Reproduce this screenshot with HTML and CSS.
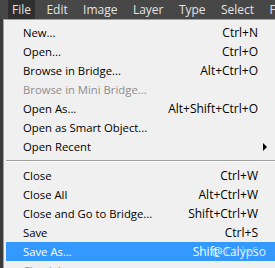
FILE: index.html
```html
<!DOCTYPE html>
<html lang="en">
<head>
    <meta charset="UTF-8">
    <title>File menu</title>
    <link rel="stylesheet" href="styles.css">
</head>
<body>
    <div class="menubar">
        <span class="menubar-item active">File</span>
        <span class="menubar-item">Edit</span>
        <span class="menubar-item">Image</span>
        <span class="menubar-item">Layer</span>
        <span class="menubar-item">Type</span>
        <span class="menubar-item">Select</span>
        <span class="menubar-item">Filter</span>
    </div>

    <div class="dropdown">
        <div class="menu-item"><span class="label">New...</span><span class="shortcut">Ctrl+N</span></div>
        <div class="menu-item"><span class="label">Open...</span><span class="shortcut">Ctrl+O</span></div>
        <div class="menu-item"><span class="label">Browse in Bridge...</span><span class="shortcut">Alt+Ctrl+O</span></div>
        <div class="menu-item disabled"><span class="label">Browse in Mini Bridge...</span></div>
        <div class="menu-item"><span class="label">Open As...</span><span class="shortcut">Alt+Shift+Ctrl+O</span></div>
        <div class="menu-item"><span class="label">Open as Smart Object...</span></div>
        <div class="menu-item"><span class="label">Open Recent</span><span class="arrow"></span></div>
        <div class="separator"></div>
        <div class="menu-item"><span class="label">Close</span><span class="shortcut">Ctrl+W</span></div>
        <div class="menu-item"><span class="label">Close All</span><span class="shortcut">Alt+Ctrl+W</span></div>
        <div class="menu-item"><span class="label">Close and Go to Bridge...</span><span class="shortcut">Shift+Ctrl+W</span></div>
        <div class="menu-item"><span class="label">Save</span><span class="shortcut">Ctrl+S</span></div>
        <div class="menu-item selected"><span class="label">Save As...</span><span class="shortcut">Shift<span class="ghost">+Ctrl+S</span><span class="watermark">@Calypso</span></span></div>
        <div class="menu-item disabled"><span class="label">Check In...</span></div>
    </div>
</body>
</html>
```

FILE: styles.css
```css
body {
    margin: 0;
    background: #3a3a3a;
    font-family: "Open Sans", "Noto Sans", sans-serif;
    font-size: 12px;
    overflow: hidden;
}
.menubar {
    display: flex;
    height: 19px;
    padding-left: 8px;
    background: #474747;
    color: #e4e4e4;
    font-size: 12px;
    white-space: nowrap;
}
.menubar-item {
    padding: 0 4px;
    margin-right: 7.4px;
    line-height: 19px;
}
.menubar-item.active {
    background: #2f2f2f;
}
.dropdown {
    margin-left: 3px;
    padding-top: 3px;
    background: #f0f0f0;
    border-left: 1px solid #a0a0a0;
    border-top: 1px solid #a0a0a0;
}
.menu-item {
    display: flex;
    justify-content: space-between;
    align-items: center;
    height: 19px;
    margin-left: 2px;
    padding: 0 17px 0 17px;
    color: #000;
    white-space: nowrap;
}
.label {
    font-size: 11.3px;
}
.menu-item.disabled {
    color: #8d8d8d;
}
.menu-item.selected {
    background: #3399ff;
    color: #fff;
}
.shortcut {
    position: relative;
}
.ghost {
    color: rgba(255,255,255,0.35);
}
.watermark {
    position: absolute;
    left: 19px;
    top: 0;
    color: rgba(255,255,255,0.85);
}
.arrow {
    width: 0;
    height: 0;
    margin-right: -9px;
    border-top: 4px solid transparent;
    border-bottom: 4px solid transparent;
    border-left: 4px solid #000;
}
.separator {
    height: 1px;
    margin: 4px 0 4px 2px;
    background: #a0a0a0;
    border-bottom: 1px solid #fff;
}
```
